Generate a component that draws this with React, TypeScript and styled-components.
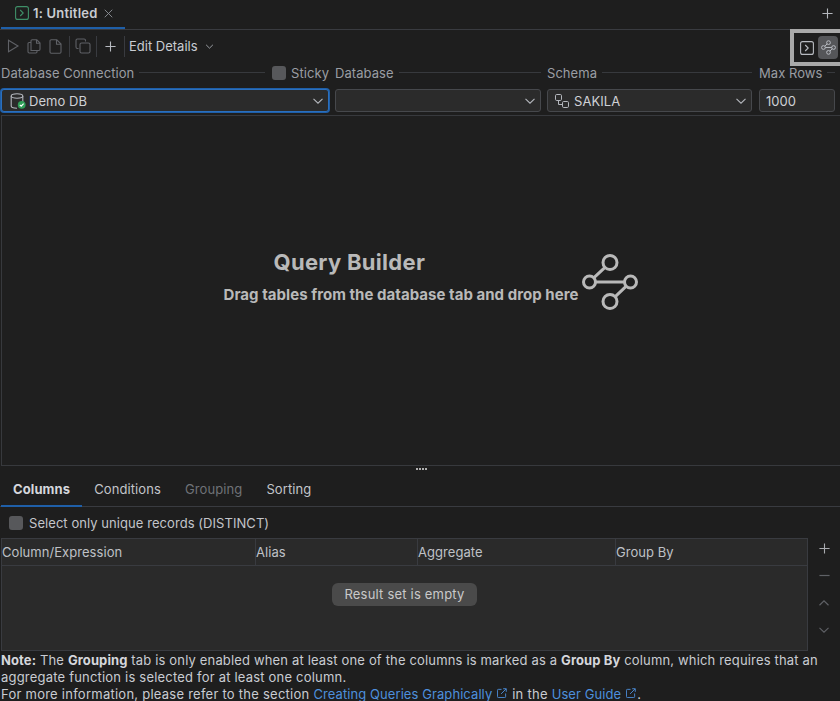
import React from 'react';
import styled, { createGlobalStyle } from 'styled-components';

const Global = createGlobalStyle`
  html, body { margin: 0; padding: 0; background: #1e1e1e; }
  body { font-family: Inter, "Liberation Sans", sans-serif; font-size: 13px; color: #dfe1e5; overflow: hidden; }
  * { box-sizing: border-box; }
`;

const Page = styled.div`
  width: 840px;
  height: 701px;
  display: flex;
  flex-direction: column;
  overflow: hidden;
  background: #1e1e1e;
`;

const TabBar = styled.div`
  height: 30px;
  flex: none;
  display: flex;
  justify-content: space-between;
  border-bottom: 1px solid #393b40;
`;

const EditorTab = styled.div`
  width: 124px;
  height: 29px;
  margin-left: 1px;
  padding-left: 14px;
  display: flex;
  align-items: center;
  gap: 4px;
  border-bottom: 2px solid #1f5fa8;
  font-weight: 600;
  letter-spacing: 0.2px;
  color: #c9ccd2;
  padding-bottom: 1px;
`;

const TabClose = styled.span`
  display: flex;
  margin-left: 3px;
  color: #8f9298;
`;

const TabAdd = styled.div`
  width: 26px;
  display: flex;
  align-items: center;
  justify-content: center;
  color: #b4b7bd;
  padding-bottom: 2px;
`;

const Toolbar = styled.div`
  height: 34px;
  flex: none;
  display: flex;
  align-items: flex-start;
  justify-content: space-between;
`;

const ToolGroup = styled.div`
  display: flex;
  align-items: center;
  height: 32px;
  padding-left: 4px;
`;

const ToolIcon = styled.span<{ $w?: number; $on?: boolean }>`
  width: ${p => p.$w ?? 21}px;
  display: flex;
  justify-content: center;
  color: ${p => (p.$on ? '#b8bbc1' : '#5f6166')};
`;

const ToolSep = styled.span`
  width: 1px;
  height: 21px;
  background: #393b40;
  margin: 0 3px;
`;

const EditDetails = styled.div`
  display: flex;
  align-items: center;
  gap: 7px;
  margin-left: 1px;
  color: #c9ccd2;
`;

const ModeBox = styled.div`
  width: 50px;
  height: 37px;
  margin-top: -1px;
  border: 4px solid #a9a9a9;
  border-right: 0;
  display: flex;
  align-items: center;
  padding-left: 2px;
  gap: 1px;
`;

const ModeBtn = styled.span<{ $on?: boolean }>`
  width: ${p => (p.$on ? 20 : 21)}px;
  height: 23px;
  border-radius: 4px;
  display: flex;
  align-items: center;
  justify-content: center;
  color: #b8bbc1;
  background: ${p => (p.$on ? '#555659' : 'transparent')};
`;

const FieldRow = styled.div`
  display: flex;
  flex: none;
  height: 50px;
  padding-left: 1px;
`;

const Field = styled.div<{ $w: number; $ml?: number }>`
  width: ${p => p.$w}px;
  margin-left: ${p => p.$ml ?? 0}px;
  display: flex;
  flex-direction: column;
`;

const LabelRow = styled.div`
  height: 17px;
  margin-bottom: 8px;
  display: flex;
  align-items: center;
  gap: 5px;
  color: #9a9da3;
  letter-spacing: 0.05px;
  white-space: nowrap;
`;

const LabelRule = styled.span`
  flex: 1;
  height: 1px;
  background: #37393d;
`;

const CheckBox = styled.span`
  width: 14px;
  height: 14px;
  flex: none;
  border-radius: 3px;
  background: #57585b;
`;

const StickyBox = styled(CheckBox)`
  margin-left: 2px;
`;

const Select = styled.div<{ $focus?: boolean; $tight?: boolean }>`
  height: 23px;
  display: flex;
  align-items: center;
  padding: 0 4px 0 ${p => (p.$tight ? 6 : 7)}px;
  gap: 5px;
  background: #2b2b2b;
  border: 1px solid ${p => (p.$focus ? '#2a6fbe' : '#46484c')};
  box-shadow: ${p => (p.$focus ? '0 0 0 1px #1f5fa8' : 'none')};
  border-radius: 3px;
  color: #cfd1d6;
  letter-spacing: 0.05px;
`;

const SelectText = styled.span`
  flex: 1;
`;

const Canvas = styled.div`
  height: 351px;
  flex: none;
  margin-top: 1px;
  margin-left: 1px;
  border: 1px solid #37393d;
  border-right: 0;
  display: flex;
  align-items: center;
  justify-content: center;
  padding: 0 0 19px 20px;
  gap: 4px;
  background: #1f1f1f;
`;

const CanvasText = styled.div`
  display: flex;
  flex-direction: column;
  align-items: flex-start;
  gap: 10px;
  padding-bottom: 11px;
  color: #b9b9b9;
  font-weight: 700;
`;

const CanvasTitle = styled.div`
  margin-left: 50px;
  font-size: 22px;
  line-height: 27px;
  letter-spacing: 0.3px;
`;

const CanvasHint = styled.div`
  font-size: 15px;
  line-height: 17px;
  letter-spacing: 0.04px;
`;

const Splitter = styled.div`
  height: 4px;
  flex: none;
  display: flex;
  justify-content: center;
  gap: 1px;
  padding-left: 2px;
`;

const Dot = styled.span`
  width: 2px;
  height: 2px;
  margin-top: 2px;
  background: #b0b0b0;
`;

const SubTabs = styled.div`
  height: 37px;
  flex: none;
  display: flex;
  padding-left: 1px;
  border-bottom: 1px solid #393b40;
`;

const SubTab = styled.div<{ $active?: boolean; $off?: boolean }>`
  padding: 3px 12px 0;
  display: flex;
  align-items: center;
  letter-spacing: 0.1px;
  margin-bottom: -1px;
  font-weight: ${p => (p.$active ? 700 : 400)};
  color: ${p => (p.$off ? '#6f7277' : p.$active ? '#d5d7dc' : '#c3c5ca')};
  border-bottom: ${p => (p.$active ? '2px solid #1f5fa8' : '2px solid transparent')};
`;

const DistinctRow = styled.label`
  height: 31px;
  flex: none;
  padding-left: 9px;
  display: flex;
  align-items: center;
  gap: 6px;
  color: #c3c5ca;
  letter-spacing: 0.06px;
`;

const GridRow = styled.div`
  display: flex;
  flex: none;
  height: 113px;
`;

const Grid = styled.div`
  width: 807px;
  margin-left: 1px;
  border: 1px solid #393b40;
  background: #2a2a2a;
  display: flex;
  flex-direction: column;
`;

const GridHead = styled.div`
  display: grid;
  grid-template-columns: 254px 162px 198px 1fr;
  height: 27px;
  flex: none;
  border-bottom: 1px solid #393b40;
`;

const HeadCell = styled.div`
  display: flex;
  align-items: center;
  color: #bfc1c6;
  letter-spacing: 0.05px;
  border-right: 1px solid #393b40;
  &:last-child { border-right: 0; }
`;

const GridBody = styled.div`
  flex: 1;
  display: flex;
  justify-content: center;
  padding-top: 17px;
`;

const EmptyPill = styled.div`
  height: 23px;
  padding: 0 12px 1px;
  display: flex;
  align-items: center;
  border-radius: 6px;
  background: #4a4a4a;
  color: #c9c9c9;
  letter-spacing: 0.2px;
`;

const SideButtons = styled.div`
  flex: 1;
  display: flex;
  flex-direction: column;
  align-items: center;
  margin-top: -3px;
`;

const SideBtn = styled.span<{ $on?: boolean }>`
  height: 27px;
  display: flex;
  align-items: center;
  color: ${p => (p.$on ? '#a9abb0' : '#5f6166')};
`;

const Note = styled.div`
  padding-left: 1px;
  margin-top: 1px;
  color: #c9ccd2;
  white-space: nowrap;
  b { font-weight: 700; color: #d5d7dc; letter-spacing: 0.1px; }
`;

const NoteLine = styled.div<{ $ls: number; $last?: boolean }>`
  line-height: ${p => (p.$last ? 15 : 17)}px;
  padding-top: ${p => (p.$last ? 1 : 0)}px;
  letter-spacing: ${p => p.$ls}px;
`;

const DocLink = styled.span`
  color: #4d8fdc;
  letter-spacing: 0.08px;
`;

const ExtIcon = styled.svg`
  margin: 0 1px 0 5px;
  vertical-align: 1px;
`;

const DbSvg = styled.svg`
  margin: 0 -2px 0 1px;
  flex: none;
`;

const Ext = () => (
  <ExtIcon width="10" height="10" viewBox="0 0 11 11" fill="none" stroke="#4d8fdc" strokeWidth="1">
    <path d="M5 1.5H1.5a1 1 0 0 0-1 1v7a1 1 0 0 0 1 1h7a1 1 0 0 0 1-1V6" />
    <path d="M4.5 6.5 10 1M6.8.8h3.4v3.4" />
  </ExtIcon>
);

const Chevron = ({ size = 12, color = '#b4b7bd' }: { size?: number; color?: string }) => (
  <svg width={size} height={size} viewBox="0 0 12 12" fill="none" stroke={color} strokeWidth="1.1">
    <path d="M1.5 3.8 6 8.2l4.5-4.4" />
  </svg>
);

const ConsoleIcon = ({ color = 'currentColor', size = 14 }: { color?: string; size?: number }) => (
  <svg width={size} height={size} viewBox="0 0 14 14" fill="none" stroke={color} strokeWidth="1.1">
    <rect x="0.6" y="0.6" width="12.8" height="12.8" rx="2" />
    <path d="M5.2 4 8.2 7l-3 3" />
  </svg>
);

const BuilderSmall = () => (
  <svg width="15" height="15" viewBox="0 0 16 16" fill="none" stroke="currentColor" strokeWidth="1.05">
    <circle cx="8" cy="2.8" r="2" />
    <circle cx="2.6" cy="8" r="2" />
    <circle cx="13.4" cy="8" r="2" />
    <circle cx="8" cy="13.2" r="2" />
    <path d="M4.6 8h6.8M6.5 4.2 4 6.6M12 9.4l-2.5 2.4" />
  </svg>
);

const BuilderLarge = () => (
  <svg width="56" height="57" viewBox="0 0 56 57" fill="none" stroke="#b9b9b9" strokeWidth="3">
    <circle cx="28" cy="9.5" r="7" />
    <circle cx="7.5" cy="29" r="6" />
    <circle cx="48.5" cy="29" r="6" />
    <circle cx="28" cy="48.5" r="7" />
    <path d="M13.5 29h29M23 14.3 12 24.6M44 33.4 33 43.8" />
  </svg>
);

const Play = () => (
  <svg width="14" height="14" viewBox="0 0 14 14" fill="none" stroke="currentColor" strokeWidth="1.1">
    <path d="M2.5 1.2v11.6L12 7z" />
  </svg>
);

const Copy = () => (
  <svg width="14" height="15" viewBox="0 0 14 15" fill="none" stroke="currentColor" strokeWidth="1.1">
    <path d="M4 11.5V2a1.2 1.2 0 0 1 1.2-1.2h4.6L13 4v6.3a1.2 1.2 0 0 1-1.2 1.2z" />
    <path d="M4 3.5H2.2A1.2 1.2 0 0 0 1 4.7v8.1A1.2 1.2 0 0 0 2.2 14h6.6a1.2 1.2 0 0 0 1.2-1.2v-1.3" />
    <path d="M9.5 1v3.3H13" />
  </svg>
);

const Doc = () => (
  <svg width="13" height="15" viewBox="0 0 13 15" fill="none" stroke="currentColor" strokeWidth="1.1">
    <path d="M1 2a1.2 1.2 0 0 1 1.2-1.2h5.6L12 5v8a1.2 1.2 0 0 1-1.2 1.2H2.2A1.2 1.2 0 0 1 1 13z" />
    <path d="M7.5 1v4.3H12" />
  </svg>
);

const Frames = () => (
  <svg width="16" height="16" viewBox="0 0 16 16" fill="none" stroke="currentColor" strokeWidth="1.1">
    <path d="M3.5 10.5H2.4A1.4 1.4 0 0 1 1 9.1V2.4A1.4 1.4 0 0 1 2.4 1h6.7a1.4 1.4 0 0 1 1.4 1.4v1.1" />
    <rect x="5" y="5" width="10" height="10" rx="1.6" />
  </svg>
);

const Plus = ({ size = 13 }: { size?: number }) => (
  <svg width={size} height={size} viewBox="0 0 13 13" fill="none" stroke="currentColor" strokeWidth="1.3">
    <path d="M6.5.5v12M.5 6.5h12" />
  </svg>
);

const Close = () => (
  <svg width="9" height="9" viewBox="0 0 10 10" fill="none" stroke="currentColor" strokeWidth="1">
    <path d="M.8.8l8.4 8.4M9.2.8.8 9.2" />
  </svg>
);

const DbIcon = () => (
  <DbSvg width="16" height="16" viewBox="0 0 16 16" fill="none">
    <g stroke="#b4b7bd" strokeWidth="1.1">
      <ellipse cx="7" cy="3" rx="5.8" ry="2.2" />
      <path d="M1.2 3v10c0 1.2 2.6 2.2 5.8 2.2M12.8 3v6" />
    </g>
    <circle cx="11.7" cy="11.8" r="3.9" fill="#2f9e57" />
    <path d="M9.8 11.8l1.4 1.4 2.4-2.6" stroke="#fff" strokeWidth="1.1" />
  </DbSvg>
);

const SchemaIcon = () => (
  <svg width="14" height="14" viewBox="0 0 14 14" fill="none" stroke="#b4b7bd" strokeWidth="1">
    <rect x="0.5" y="0.5" width="6" height="6" rx="1.2" />
    <rect x="7.5" y="7.5" width="6" height="6" rx="1.2" />
    <path d="M3.5 6.5v4h4" />
  </svg>
);

const Minus = () => (
  <svg width="11" height="11" viewBox="0 0 13 13" fill="none" stroke="currentColor" strokeWidth="1.4">
    <path d="M.5 6.5h12" />
  </svg>
);

const Up = () => (
  <svg width="12" height="12" viewBox="0 0 12 12" fill="none" stroke="currentColor" strokeWidth="1.2">
    <path d="M1.5 8.2 6 3.8l4.5 4.4" />
  </svg>
);

export default function App() {
  return (
    <Page>
      <Global />
      <TabBar>
        <EditorTab>
          <ConsoleIcon color="#3f8f68" />
          <span>1: Untitled</span>
          <TabClose><Close /></TabClose>
        </EditorTab>
        <TabAdd><Plus size={11} /></TabAdd>
      </TabBar>

      <Toolbar>
        <ToolGroup>
          <ToolIcon $w={18}><Play /></ToolIcon>
          <ToolIcon $w={23}><Copy /></ToolIcon>
          <ToolIcon><Doc /></ToolIcon>
          <ToolSep />
          <ToolIcon $w={20}><Frames /></ToolIcon>
          <ToolSep />
          <ToolIcon $on><Plus size={11} /></ToolIcon>
          <ToolSep />
          <EditDetails>Edit Details <Chevron size={9} /></EditDetails>
        </ToolGroup>
        <ModeBox>
          <ModeBtn><ConsoleIcon /></ModeBtn>
          <ModeBtn $on><BuilderSmall /></ModeBtn>
        </ModeBox>
      </Toolbar>

      <FieldRow>
        <Field $w={328}>
          <LabelRow>
            Database Connection
            <LabelRule />
            <StickyBox />
            Sticky
          </LabelRow>
          <Select $focus>
            <DbIcon />
            <SelectText>Demo DB</SelectText>
            <Chevron />
          </Select>
        </Field>
        <Field $w={206} $ml={6}>
          <LabelRow>Database<LabelRule /></LabelRow>
          <Select>
            <SelectText />
            <Chevron />
          </Select>
        </Field>
        <Field $w={205} $ml={6}>
          <LabelRow>Schema<LabelRule /></LabelRow>
          <Select>
            <SchemaIcon />
            <SelectText>SAKILA</SelectText>
            <Chevron />
          </Select>
        </Field>
        <Field $w={76} $ml={7}>
          <LabelRow>Max Rows<LabelRule /></LabelRow>
          <Select $tight>
            <SelectText>1000</SelectText>
          </Select>
        </Field>
      </FieldRow>

      <Canvas>
        <CanvasText>
          <CanvasTitle>Query Builder</CanvasTitle>
          <CanvasHint>Drag tables from the database tab and drop here</CanvasHint>
        </CanvasText>
        <BuilderLarge />
      </Canvas>

      <Splitter><Dot /><Dot /><Dot /><Dot /></Splitter>

      <SubTabs>
        <SubTab $active>Columns</SubTab>
        <SubTab>Conditions</SubTab>
        <SubTab $off>Grouping</SubTab>
        <SubTab>Sorting</SubTab>
      </SubTabs>

      <DistinctRow>
        <CheckBox />
        Select only unique records (DISTINCT)
      </DistinctRow>

      <GridRow>
        <Grid>
          <GridHead>
            <HeadCell>Column/Expression</HeadCell>
            <HeadCell>Alias</HeadCell>
            <HeadCell>Aggregate</HeadCell>
            <HeadCell>Group By</HeadCell>
          </GridHead>
          <GridBody>
            <EmptyPill>Result set is empty</EmptyPill>
          </GridBody>
        </Grid>
        <SideButtons>
          <SideBtn $on><Plus size={11} /></SideBtn>
          <SideBtn><Minus /></SideBtn>
          <SideBtn><Up /></SideBtn>
          <SideBtn><Chevron color="currentColor" /></SideBtn>
        </SideButtons>
      </GridRow>

      <Note>
        <NoteLine $ls={0.16}><b>Note:</b> The <b>Grouping</b> tab is only enabled when at least one of the columns is marked as a <b>Group By</b> column, which requires that an</NoteLine>
        <NoteLine $ls={0.2}>aggregate function is selected for at least one column.</NoteLine>
        <NoteLine $ls={0.25} $last>
          For more information, please refer to the section <DocLink>Creating Queries Graphically</DocLink><Ext /> in the <DocLink>User Guide</DocLink><Ext />.
        </NoteLine>
      </Note>
    </Page>
  );
}
